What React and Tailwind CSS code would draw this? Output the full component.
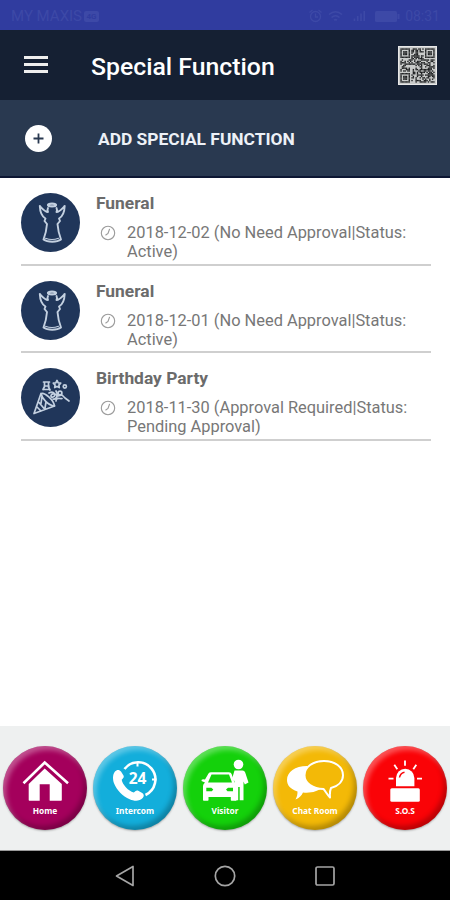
import React, { useState } from 'react';

const FUNCTIONS = [
  { id: 1, title: 'Funeral', type: 'funeral', date: '2018-12-02', approval: 'No Need Approval', status: 'Active' },
  { id: 2, title: 'Funeral', type: 'funeral', date: '2018-12-01', approval: 'No Need Approval', status: 'Active' },
  { id: 3, title: 'Birthday Party', type: 'party', date: '2018-11-30', approval: 'Approval Required', status: 'Pending Approval' },
];

const QR_SIZE = 25;

// finder squares in three corners, pseudo-random modules elsewhere
const isDark = (x, y) => {
  const corners = [[0, 0], [QR_SIZE - 7, 0], [0, QR_SIZE - 7]];
  for (const [cx, cy] of corners) {
    const dx = x - cx;
    const dy = y - cy;
    if (dx >= -1 && dx <= 7 && dy >= -1 && dy <= 7) {
      const ring = Math.max(Math.abs(dx - 3), Math.abs(dy - 3));
      return ring === 3 || ring <= 1;
    }
  }
  const n = Math.sin(x * 12.9898 + y * 78.233) * 43758.5453;
  return n - Math.floor(n) > 0.5;
};

const QrCode = () => {
  const cells = [];
  for (let y = 0; y < QR_SIZE; y++) {
    for (let x = 0; x < QR_SIZE; x++) {
      if (isDark(x, y)) cells.push(<rect key={`${x}-${y}`} x={x} y={y} width="1" height="1" />);
    }
  }
  return (
    <svg viewBox="-1 -1 27 27" className="w-[39px] h-[39px] -mt-[3px] bg-[#c9cbca] border border-[#e8e8e8]" fill="#1d1f20">
      {cells}
    </svg>
  );
};

const StatusBar = () => (
  <div className="h-[30px] bg-[#303c9f] flex items-center justify-between pt-[2px] pl-[11px] pr-[10px] text-[15px] text-[#3d49a7]">
    <div className="flex items-center gap-[2px]">
      <span>MY MAXIS</span>
      <span className="w-[15px] h-[11px] rounded-xs bg-[#3d49a7] text-[#303c9f] text-[8px] leading-[11px] font-bold text-center">4G</span>
    </div>
    <div className="flex items-center gap-[5px]">
      <svg width="15" height="14" viewBox="0 0 15 14" fill="none" stroke="currentColor" strokeWidth="1.3">
        <circle cx="7.5" cy="7.5" r="5" />
        <path d="M7.5 4.5v3.5h2.5M1.5 3.5l3-2.5M13.5 3.5l-3-2.5" />
      </svg>
      <svg width="15" height="12" viewBox="0 0 15 12" fill="none" stroke="currentColor" strokeWidth="1.6">
        <path d="M1 4.5c4-3.500 9-3.500 13 0M3.500 7.500c2.500-2.200 5.500-2.200 8 0M6 10.200c1-.8 2-.8 3 0" />
      </svg>
      <svg width="22" height="12" viewBox="0 0 22 12" fill="currentColor" className="pl-1">
        <path d="M2 9h2v3H2zM6 6h2v6H6zM10 3h2v9h-2zM14 0h2v12h-2z" />
      </svg>
      <svg width="25" height="11" viewBox="0 0 25 11" fill="currentColor">
        <rect width="22" height="11" rx="1.5" />
        <rect x="22.5" y="3" width="2" height="5" />
      </svg>
      <span className="text-[14px]">08:31</span>
    </div>
  </div>
);

const FuneralIcon = () => (
  <svg viewBox="0 0 59 59" className="w-[59px] h-[59px]" fill="none" stroke="#c3d0e0" strokeWidth="1.9" strokeLinejoin="round" strokeLinecap="round">
    <ellipse cx="31" cy="12" rx="4" ry="1.4" strokeWidth="2.2" />
    <path d="M27 15c-1 2-.5 3 0 4-3 0-5-2.500-8.200-6 .2 5 1.200 10 5.700 12.500l-1 2.500 2.500 3c-.5 6-1 9.500-3.500 15.500 4 3 13.500 3 17.500 0-2.500-6-3-9.500-3.500-15.500l2.500-3-1-2.500c4.500-2.500 5.500-7.500 5.700-12.500-3.200 3.500-5.200 6-8.200 6 .5-1 1-2 0-4" />
    <path d="M24.500 45.300c4 1.500 9 1.500 13 0" strokeWidth="1.2" />
  </svg>
);

const PartyIcon = () => (
  <svg viewBox="0 0 59 59" className="w-[59px] h-[59px]" fill="none" stroke="#c3d0e0" strokeWidth="1.7" strokeLinejoin="round" strokeLinecap="round">
    <path d="M13 45.500l7-20c1 5 7 12 13.500 12.500zM18 34.500l5.500 6.500M16 39l4 4M21 28.500l-1 7M25 34l-1 6" />
    <path d="M20.500 25.500c3-1 12 6 13 12.500" />
    <path d="M22.500 14h6M23.500 14v4.500l-1.500 3M27.500 14v5l1.500 3M23.500 18h4.500M22 21.500h7" />
    <path d="M36 12.500l1.200 2.300 2.500.4-1.800 1.900.4 2.500-2.300-1.200-2.300 1.200.4-2.500-1.800-1.900 2.500-.4z" />
    <circle cx="43.800" cy="18.500" r="1.600" />
    <circle cx="39" cy="25" r="1.900" />
    <path d="M28 25c5-3 8 3 4 4-3 1-3-4 2-3 4 1 1 6-2 5M35 33c0-4 4-2 6-2.500M37 28l4-1 3 3 4 3M35 23l2 4" />
  </svg>
);

const ClockIcon = () => (
  <svg viewBox="0 0 16 16" className="w-4 h-4 mt-[2px] shrink-0" fill="none" stroke="#9b9b9b" strokeWidth="1.1">
    <circle cx="8" cy="8" r="6.700" />
    <path d="M9.500 4.200L8 8.500 5.800 10" strokeLinecap="round" />
  </svg>
);

const FunctionRow = ({ item }) => (
  <li className="h-[87.5px] flex ml-[21px] mr-[19px] pt-[15px] border-b-2 border-[#cfcfcf]">
    <div className="w-[59px] h-[59px] rounded-full bg-[#20365a] shrink-0">
      {item.type === 'funeral' ? <FuneralIcon /> : <PartyIcon />}
    </div>
    <div className="ml-4 flex-1">
      <h3 className="text-[17.4px] leading-5 font-bold text-[#6b6b6b]">{item.title}</h3>
      <div className="flex mt-[10px] pl-1">
        <ClockIcon />
        <p className="ml-[11px] text-[16.4px] leading-[19px] text-[#777777]">
          {item.date} ({item.approval}|Status:
          <br />
          {item.status})
        </p>
      </div>
    </div>
  </li>
);

const HomeIcon = () => (
  <>
    <path d="M20.500 37.300L41.700 16.500 65 37.300" fill="none" stroke="#fff" strokeWidth="2.600" />
    <path d="M41.700 22.500L58.800 38v16q0 .7-.7.700H46.700V38.300h-10v16.400H26.400q-.7 0-.7-.7V38z" />
  </>
);

const IntercomIcon = () => (
  <>
    <path d="M31.500 23A17.200 17.200 0 1 1 52.500 49" fill="none" stroke="#fff" strokeWidth="2.6" />
    <path d="M44.500 16v4.500M59 33.500h4.500" stroke="#fff" strokeWidth="2" />
    <path d="M22 25.500c1.500-2 4.500-2.300 6 0l2.500 4c1 2-1 3.500-1.800 4.300.8 5 6.800 11.300 12 12.700 1.300-.8 2.300-2.500 4.500-1.800l4 2.300c2 1.300 2 3.500.5 5-3.500 3.700-8.500 3.200-13 1.200-7-3-13-9-15.700-16-1.300-4-1.500-8.500 1-11.700z" />
    <text x="44.600" y="38.300" textAnchor="middle" className="text-[15.500px] font-bold">24</text>
  </>
);

const VisitorIcon = () => (
  <>
    <path
      fillRule="evenodd"
      d="M28.500 26.300h17.500q2 0 2.600 1.700l3 8.500q2 1.500 2 3.500v14q0 .7-.7.700h-4.400q-.7 0-.7-.7v-3H25.500v3q0 .7-.7.700h-4q-.8 0-.8-.7V40q0-2 2-3.500l-3.500-1.500q-.5-2.500 3.500-1.500l3.500-6q.7-1.200 2.500-1.200zM28.500 28.500l-3.500 8h24l-3-8zM23.300 41.800v3.400h5.500l1.500-1.600-2-1.800zM50 41.800h-5l-2 1.800 1.500 1.600H50z"
    />
    <circle cx="55.500" cy="18.500" r="4.800" />
    <path d="M51.500 24.500h8q2 0 2.700 2l3.300 10-3.700 2-1.300-3v18.700h-3.800V41h-1.500v13.200h-3.700V35l-2.500-2z" />
  </>
);

const ChatIcon = ({ color }) => (
  <>
    <path d="M34 20c-12 0-20 6-20 14 0 5 3 9 10.500 11.500 0 3-.5 5.500-2 8 4-1.500 6-4 7.500-7 8 .8 15-1 19-5z" />
    <path
      d="M51 15c-11 0-19.500 6-19.500 14.200S40 43 50.500 43c1.800 2 3.500 5.500 6.500 8.500-.3-3.500-.3-6.500 1-9.500C65.500 40 70 35 70 29.200 70 21 62 15 51 15z"
      fill={color}
      stroke="#fff"
      strokeWidth="2"
      strokeLinejoin="round"
    />
  </>
);

const SosIcon = ({ color }) => (
  <>
    <path d="M33 40.200V32a9.200 9.200 0 0 1 18.400 0v8.200z" />
    <rect x="27.300" y="42.300" width="29.500" height="13.500" rx="1.500" />
    <path d="M36.500 31.500c.5-3 2.300-4.800 5-5.300" fill="none" stroke={color} strokeWidth="1.500" />
    <path d="M42 14.500v5.200M31.300 18.700l3 4.500M53.300 18.700l-3 4.500M25.500 32.700h5M54 32.700h5" stroke="#fff" strokeWidth="1.800" />
  </>
);

const TABS = [
  { label: 'Home', Icon: HomeIcon, color: '#a4005c', bg: 'bg-[#a4005c]' },
  { label: 'Intercom', Icon: IntercomIcon, color: '#13aedb', bg: 'bg-[#13aedb]' },
  { label: 'Visitor', Icon: VisitorIcon, color: '#14d10b', bg: 'bg-[#14d10b]' },
  { label: 'Chat Room', Icon: ChatIcon, color: '#f3b907', bg: 'bg-[#f3b907]' },
  { label: 'S.O.S', Icon: SosIcon, color: '#fa0307', bg: 'bg-[#fa0307]' },
];

const TabBar = () => (
  <nav className="h-[125px] bg-[#eef0f0] border-b border-[#999999] grid grid-cols-5 pt-[20px]">
    {TABS.map(({ label, Icon, color, bg }) => (
      <button
        key={label}
        className={`w-[84px] h-[84px] rounded-full mx-auto flex flex-col items-center text-white shadow-[inset_3px_4px_5px_rgba(255,255,255,0.32),inset_-3px_-4px_5px_rgba(0,0,0,0.25),0_1px_2px_rgba(0,0,0,0.3)] ${bg}`}
      >
        <svg viewBox="0 0 84 59" className="w-[84px] h-[59px] font-['Noto_Sans',sans-serif]" fill="#fff">
          <Icon color={color} />
        </svg>
        <span className="font-['Noto_Sans',sans-serif] font-bold text-[8.3px] leading-3">{label}</span>
      </button>
    ))}
  </nav>
);

const SystemNav = () => (
  <div className="h-[49px] bg-black flex items-center justify-center gap-[78px]">
    <svg width="22" height="22" viewBox="0 0 22 22" fill="none" stroke="#a5a5a5" strokeWidth="1.7" strokeLinejoin="round">
      <path d="M19 1.500v19L2.500 11z" />
    </svg>
    <svg width="22" height="22" viewBox="0 0 22 22" fill="none" stroke="#a5a5a5" strokeWidth="1.7">
      <circle cx="11" cy="11" r="9.700" />
    </svg>
    <svg width="22" height="22" viewBox="0 0 22 22" fill="none" stroke="#a5a5a5" strokeWidth="1.7">
      <rect x="2" y="2" width="18" height="18" rx="1.500" />
    </svg>
  </div>
);

const App = () => {
  const [items] = useState(FUNCTIONS);

  return (
    <div className="w-[450px] h-[900px] bg-white flex flex-col overflow-hidden font-['Roboto',sans-serif]">
      <StatusBar />

      {/* header */}
      <header className="h-[70px] bg-[#152033] flex items-center pl-6 pr-[13px] pt-[3px]">
        <button className="flex flex-col gap-[4px] w-6 -mt-[4px]">
          <span className="h-[3px] bg-[#eeeeee]" />
          <span className="h-[3px] bg-[#eeeeee]" />
          <span className="h-[3px] bg-[#eeeeee]" />
        </button>
        <h1 className="ml-[43px] flex-1 text-[24.8px] font-medium text-white">Special Function</h1>
        <QrCode />
      </header>

      {/* add button */}
      <button className="h-[78px] bg-[#293950] border-b-2 border-[#0d1733] flex items-center pl-[25px]">
        <span className="w-[27px] h-[27px] rounded-full bg-white flex items-center justify-center">
          <svg width="11" height="11" viewBox="0 0 11 11" stroke="#293950" strokeWidth="1.8">
            <path d="M5.500 .5v10M.5 5.500h10" />
          </svg>
        </span>
        <span className="ml-[46px] mt-[3px] text-[17.4px] font-bold text-[#edf1f7]">ADD SPECIAL FUNCTION</span>
      </button>

      {/* list */}
      <ul className="flex-1">
        {items.map((item) => (
          <FunctionRow key={item.id} item={item} />
        ))}
      </ul>

      <TabBar />
      <SystemNav />
    </div>
  );
};

export default App;
